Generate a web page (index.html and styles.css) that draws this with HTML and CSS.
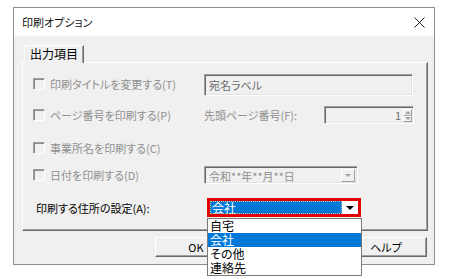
FILE: index.html
```html
<!DOCTYPE html>
<html lang="ja">

<head>
    <meta charset="UTF-8">
    <meta name="viewport" content="width=device-width, initial-scale=1.0">
    <title>印刷オプション</title>
    <link rel="stylesheet" href="styles.css">
</head>

<body>

    <!-- Dialog window -->
    <div class="window">
        <div class="titlebar">
            <span class="title">印刷オプション</span>
            <svg class="close" width="11" height="11" viewBox="0 0 11 11">
                <path d="M0.5 0.5L10.5 10.5M10.5 0.5L0.5 10.5" stroke="#222" stroke-width="1" fill="none"/>
            </svg>
        </div>

        <div class="content">
            <!-- Tabs -->
            <div class="tabs">
                <div class="tab">出力項目</div>
            </div>

            <!-- Tab panel -->
            <div class="panel">
                <div class="row row-1">
                    <div class="check"><span class="box"></span>印刷タイトルを変更する(T)</div>
                    <div class="sunken textbox">宛名ラベル</div>
                </div>

                <div class="row row-2">
                    <div class="check"><span class="box"></span>ページ番号を印刷する(P)</div>
                    <div class="spin-group">
                        <span class="spin-label">先頭ページ番号(F):</span>
                        <div class="sunken spin">
                            <span class="spin-value">1</span>
                            <span class="spin-btns">
                                <span class="spin-btn"><span class="tri-up"></span></span>
                                <span class="spin-btn"><span class="tri-down"></span></span>
                            </span>
                        </div>
                    </div>
                </div>

                <div class="row row-3">
                    <div class="check"><span class="box"></span>事業所名を印刷する(C)</div>
                </div>

                <div class="row row-4">
                    <div class="check"><span class="box"></span>日付を印刷する(D)</div>
                    <div class="sunken combo">
                        <span class="combo-text">令和**年**月**日</span>
                        <span class="combo-btn"><span class="tri-down gray"></span></span>
                    </div>
                </div>

                <div class="row row-5">
                    <div class="address-label">印刷する住所の設定(A):</div>
                    <div class="combo-focus">
                        <span class="combo-value">会社</span>
                        <span class="combo-arrow"><span class="tri-down black"></span></span>

                        <!-- Open dropdown list -->
                        <ul class="dropdown">
                            <li>自宅</li>
                            <li class="selected">会社</li>
                            <li>その他</li>
                            <li>連絡先</li>
                        </ul>
                    </div>
                </div>
            </div>

            <!-- Buttons -->
            <div class="buttons">
                <button class="btn">OK</button>
                <button class="btn">キャンセル</button>
                <button class="btn">ヘルプ</button>
            </div>
        </div>
    </div>

</body>

</html>
```

FILE: styles.css
```css
* {
    box-sizing: border-box;
}

html {
    height: 100%;
}

body {
    height: 100%;
    margin: 0;
    padding: 7px 0 0 13px;
    background-color: #fff;
    font-family: "Noto Sans CJK JP", sans-serif;
    font-feature-settings: "palt";
    color: #000;
}

/* Window frame */
.window {
    width: 422px;
    height: 258px;
    border: 1px solid #8e8e8e;
    background-color: #f0f0f0;
    display: flex;
    flex-direction: column;
}

.titlebar {
    height: 28px;
    flex: none;
    background-color: #fff;
    display: flex;
    align-items: center;
    justify-content: space-between;
    padding: 0 9px 0 8px;
}

.title {
    font-size: 11px;
    color: #111;
}

.content {
    flex: 1;
    padding: 9px 6px 0 8px;
    display: flex;
    flex-direction: column;
}

/* Tabs */
.tabs {
    display: flex;
    height: 17px;
    padding-left: 2px;
    position: relative;
    z-index: 1;
}

.tab {
    width: 60px;
    height: 18px;
    padding-left: 5px;
    font-size: 12px;
    line-height: 16px;
    background-color: #f0f0f0;
    border-top: 1px solid #fff;
    border-left: 1px solid #fff;
    border-right: 1px solid #696969;
    box-shadow: inset -1px 0 #a0a0a0;
}

.panel {
    height: 169px;
    flex: none;
    padding: 11px 0 0 10px;
    border: 1px solid;
    border-color: #fff #696969 #696969 #fff;
    box-shadow: inset -1px -1px #a0a0a0;
    display: flex;
    flex-direction: column;
}

/* Rows */
.row {
    display: grid;
    grid-template-columns: 171px 1fr;
    align-items: center;
    font-size: 11px;
    color: #8f8f8f;
}

.row-1 { height: 22px; }
.row-2 { height: 18px; margin-top: 10px; }
.row-3 { height: 18px; margin-top: 15px; }
.row-4 { height: 18px; margin-top: 9px; }
.row-5 { height: 19px; margin-top: 14px; }

.check {
    display: flex;
    align-items: center;
    gap: 5px;
    white-space: nowrap;
}

.row-1 .check {
    margin-top: -3px;
}

.box {
    width: 12px;
    height: 12px;
    border: 1px solid;
    border-color: #a0a0a0 #fff #fff #a0a0a0;
    box-shadow: inset 1px 1px #8a8a8a;
}

.sunken {
    border: 1px solid;
    border-color: #a0a0a0 #fff #fff #a0a0a0;
    box-shadow: inset 1px 1px #696969, inset -1px -1px #e3e3e3;
}

.textbox {
    width: 209px;
    height: 22px;
    padding-left: 4px;
    line-height: 20px;
    color: #6d6d6d;
}

/* Spin box */
.spin-group {
    display: flex;
    align-items: center;
}

.spin-label {
    width: 120px;
    white-space: nowrap;
}

.spin {
    width: 90px;
    height: 18px;
    display: flex;
    color: #6d6d6d;
}

.spin-value {
    flex: 1;
    text-align: right;
    padding-right: 2px;
    line-height: 16px;
}

.spin-btns {
    width: 9px;
    margin: 2px 1px 1px 0;
    display: flex;
    flex-direction: column;
}

.spin-btn {
    flex: 1;
    display: flex;
    align-items: center;
    justify-content: center;
    border: 1px solid;
    border-color: #fff #a0a0a0 #a0a0a0 #fff;
}

/* Triangles */
.tri-up,
.tri-down {
    width: 0;
    height: 0;
    border-left: 3px solid transparent;
    border-right: 3px solid transparent;
}

.tri-up {
    border-bottom: 3px solid #a0a0a0;
}

.tri-down {
    border-top: 3px solid #a0a0a0;
}

.tri-down.black {
    border-left-width: 4px;
    border-right-width: 4px;
    border-top: 4px solid #000;
}

/* Disabled combo */
.combo {
    width: 154px;
    height: 18px;
    display: flex;
    padding: 2px 2px 1px 2px;
}

.combo-text {
    flex: 1;
    padding-left: 2px;
    line-height: 14px;
    color: #8f8f8f;
}

.combo-btn {
    width: 14px;
    display: flex;
    align-items: center;
    justify-content: center;
    border: 1px solid;
    border-color: #fff #a0a0a0 #a0a0a0 #fff;
}

/* Address label and focused combo */
.address-label {
    padding-left: 3px;
    color: #000;
    white-space: nowrap;
}

.combo-focus {
    position: relative;
    width: 154px;
    height: 19px;
    margin-left: 3px;
    border: 3px solid #e20000;
    background-color: #fff;
    display: flex;
}

.combo-value {
    flex: 1;
    background-color: #0078d7;
    color: #fff;
    font-size: 12px;
    line-height: 13px;
    padding-left: 2px;
    outline: 1px dotted #c9c9a0;
    outline-offset: -1px;
}

.combo-arrow {
    width: 16px;
    display: flex;
    align-items: center;
    justify-content: center;
}

.dropdown {
    position: absolute;
    left: -3px;
    top: 17px;
    width: 155px;
    margin: 0;
    padding: 0;
    list-style: none;
    background-color: #fff;
    border: 1px solid #7a7a7a;
    color: #000;
    font-size: 12px;
    z-index: 10;
}

.dropdown li {
    height: 14px;
    line-height: 13px;
    padding-left: 2px;
}

.dropdown li.selected {
    background-color: #0078d7;
    color: #fff;
}

/* Dialog buttons */
.buttons {
    display: flex;
    justify-content: flex-end;
    gap: 13px;
    margin-top: 6px;
    padding-right: 1px;
}

.btn {
    width: 82px;
    height: 20px;
    padding: 0;
    font-family: inherit;
    font-feature-settings: "palt";
    font-size: 11px;
    color: #000;
    background-color: #f0f0f0;
    border: 1px solid;
    border-color: #fff #696969 #696969 #fff;
    box-shadow: inset -1px -1px #a0a0a0;
}
```
